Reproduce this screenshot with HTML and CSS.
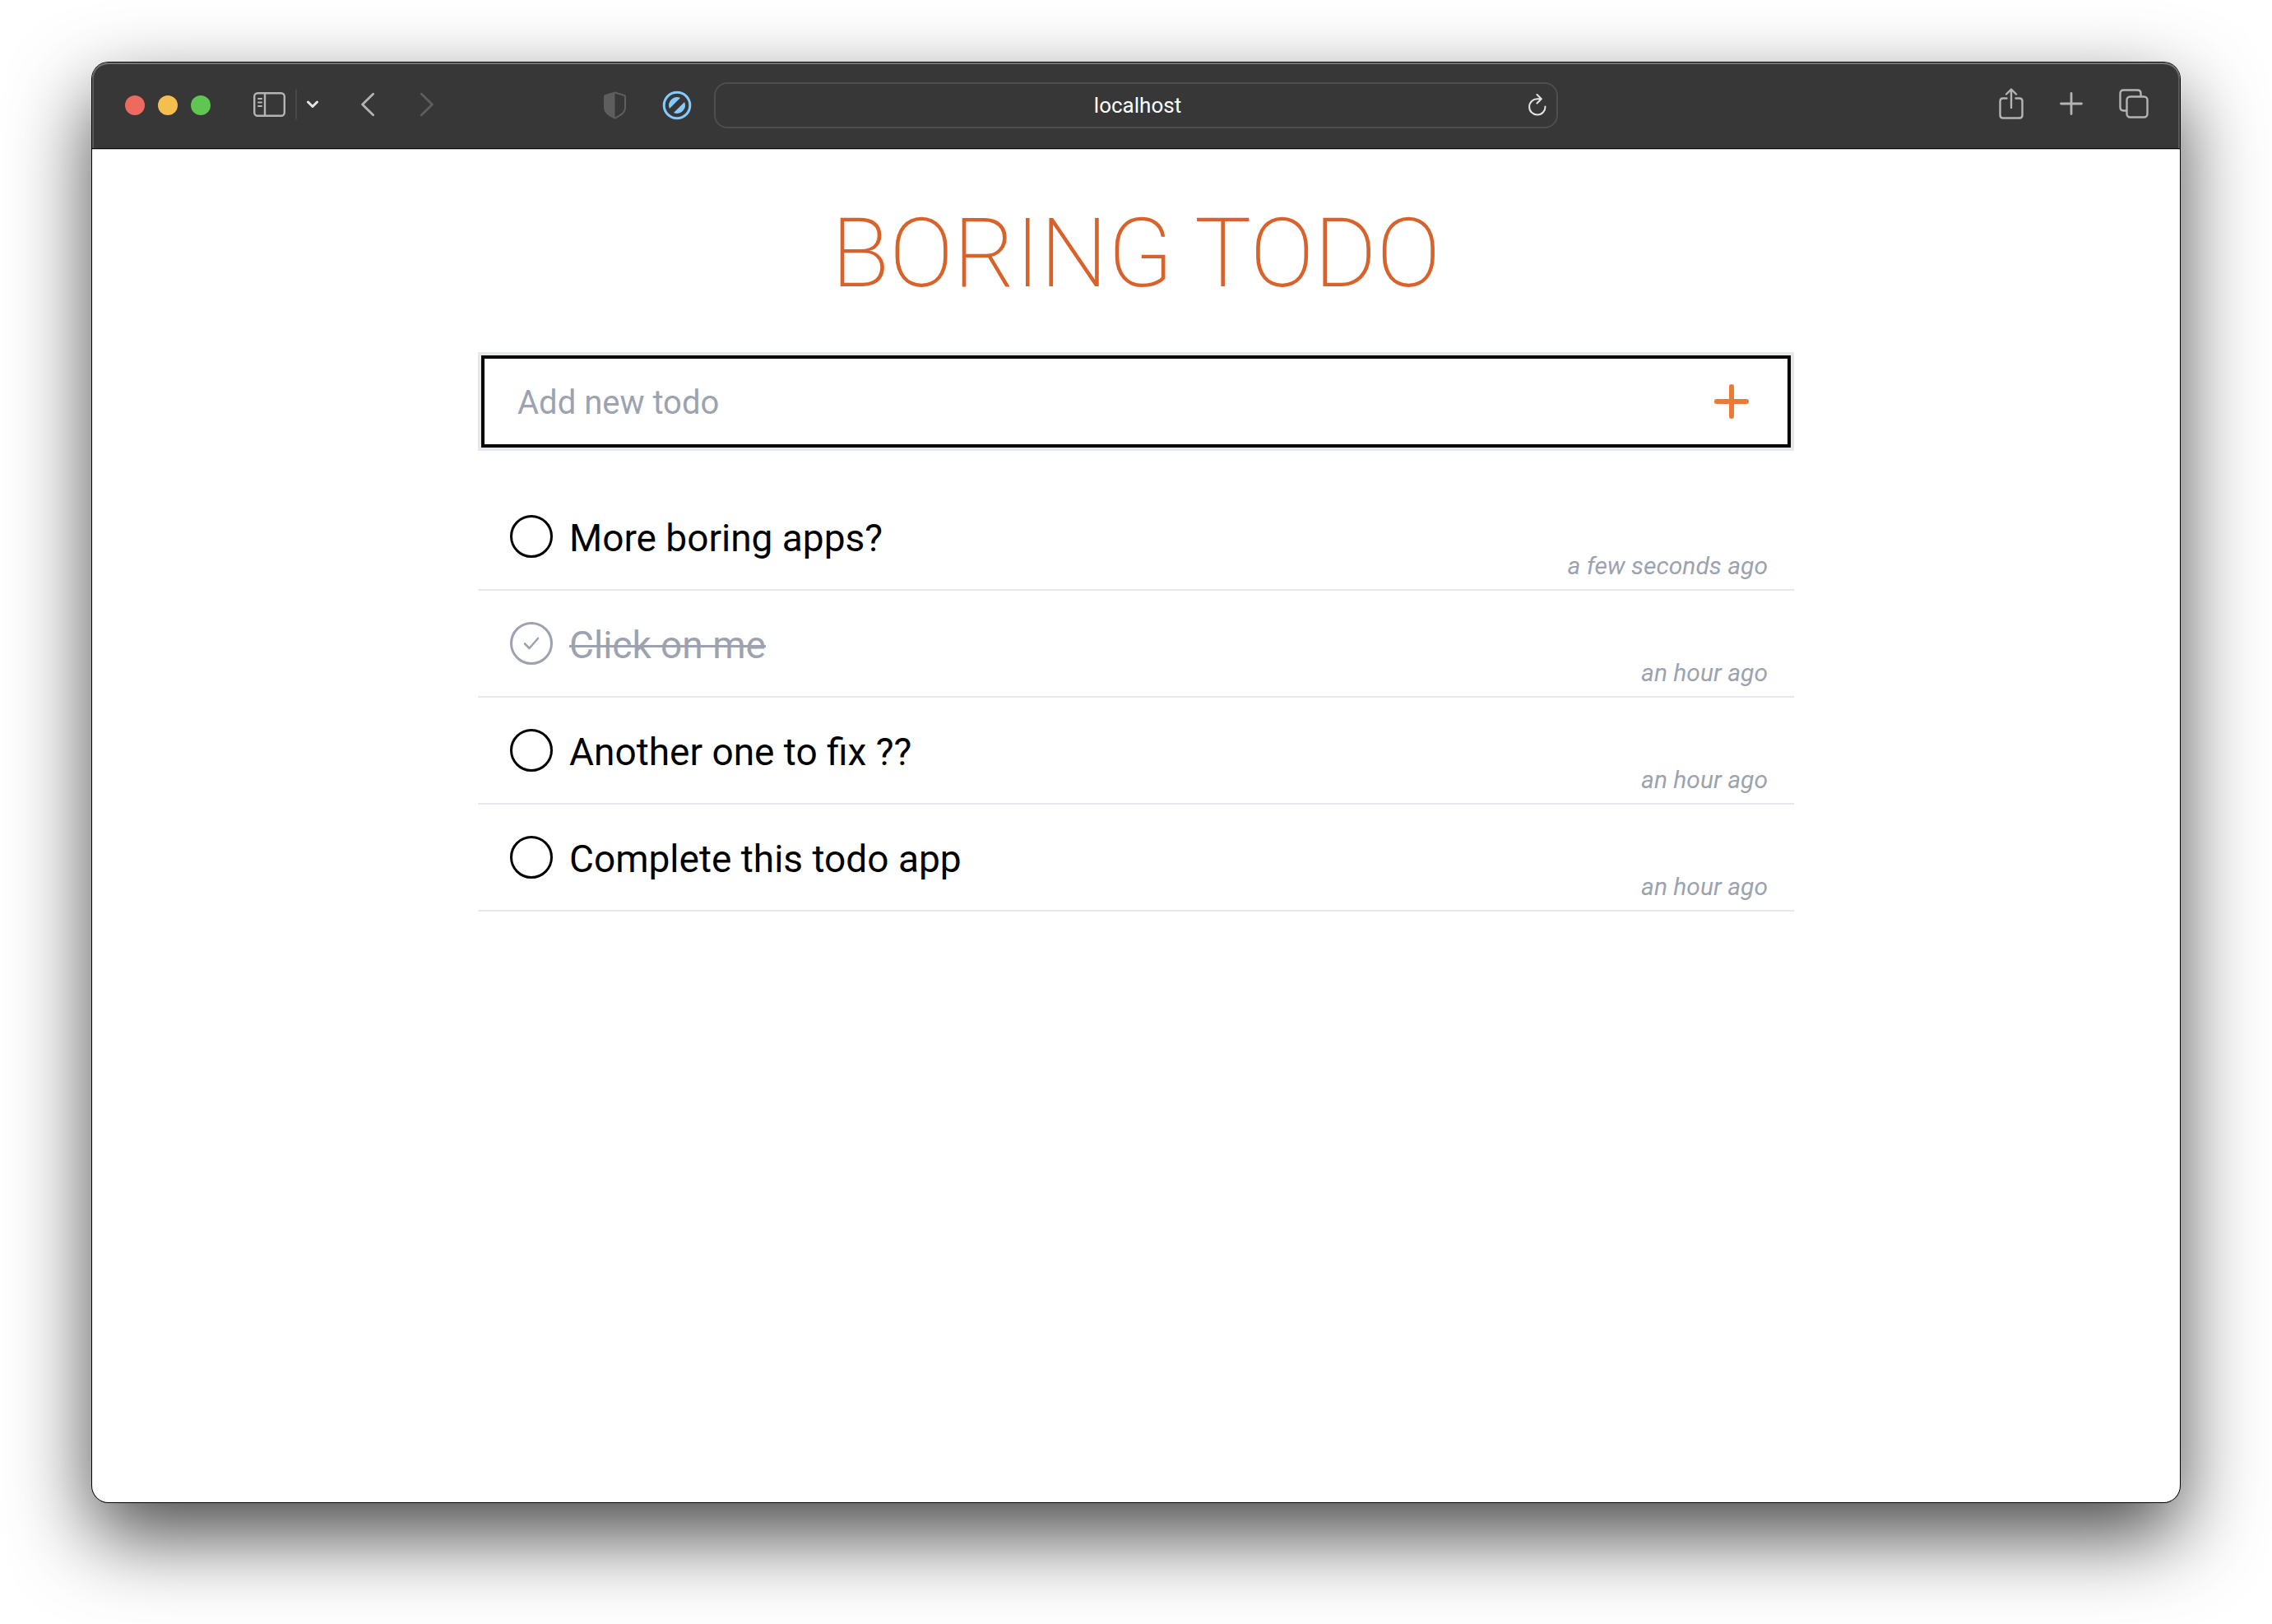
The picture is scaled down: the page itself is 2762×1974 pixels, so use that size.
FILE: index.html
```html
<!DOCTYPE html>
<html lang="en">
<head>
<meta charset="utf-8">
<title>Boring Todo</title>
<meta name="viewport" content="width=device-width, initial-scale=1">
<link rel="stylesheet" href="styles.css">
</head>
<body>
<div class="window">
  <header class="toolbar">
    <div class="toolbar-left">
      <div class="lights">
        <button class="light light-close" aria-label="Close"></button>
        <button class="light light-minimize" aria-label="Minimize"></button>
        <button class="light light-zoom" aria-label="Zoom"></button>
      </div>
      <div class="sidebar-tools">
        <button class="tool" aria-label="Show sidebar">
          <svg width="39" height="30" viewBox="0 0 39 30" fill="none" stroke="currentColor" stroke-width="2.400" stroke-linecap="round">
            <rect x="1.200" y="1.200" width="36.600" height="27.600" rx="4"/>
            <path d="M14 1v28"/><path stroke-width="2" d="M6 8h4M6 12.500h4M6 17h4"/>
          </svg>
        </button>
        <span class="separator"></span>
        <button class="tool tool-bright" aria-label="Tab groups">
          <svg width="14" height="10" viewBox="0 0 14 10" fill="none" stroke="currentColor" stroke-width="3" stroke-linecap="round" stroke-linejoin="round"><path d="M1.500 2 7 7.500 12.500 2"/></svg>
        </button>
      </div>
      <nav class="history" aria-label="History">
        <button class="tool" aria-label="Back">
          <svg width="16" height="30" viewBox="0 0 16 30" fill="none" stroke="currentColor" stroke-width="2.800" stroke-linecap="round" stroke-linejoin="round"><path d="M14.600 2.200 1.600 15l13 12.800"/></svg>
        </button>
        <button class="tool tool-dim" aria-label="Forward">
          <svg width="16" height="30" viewBox="0 0 16 30" fill="none" stroke="currentColor" stroke-width="2.800" stroke-linecap="round" stroke-linejoin="round"><path d="M1.400 2.200l13 12.800-13 12.800"/></svg>
        </button>
      </nav>
      <div class="extensions">
        <button class="tool tool-dim" aria-label="Privacy report">
          <svg width="27" height="34" viewBox="0 0 27 34"><path d="M13.500 1.500 25 5c.6.200 1 .7 1 1.400V20c0 5-3.500 8-12.500 12.700C4.500 28 1 25 1 20V6.400C1 5.700 1.400 5.200 2 5Z" fill="none" stroke="currentColor" stroke-width="2"/><path d="M13.500 1.500V32.700C4.500 28 1 25 1 20V6.400C1 5.700 1.400 5.200 2 5Z" fill="currentColor"/></svg>
        </button>
        <button class="tool tool-blue" aria-label="Content blocker">
          <svg width="36" height="36" viewBox="0 0 36 36"><circle cx="18" cy="18" r="15.800" fill="none" stroke="currentColor" stroke-width="3"/><path d="M8.900 22A10 10 0 0 1 22 8.900ZM27.100 14A10 10 0 0 1 14 27.100Z" fill="currentColor"/></svg>
        </button>
      </div>
    </div>
    <div class="address">
      <input class="address-input" type="text" value="localhost" aria-label="Address">
      <button class="tool tool-bright" aria-label="Reload">
        <svg width="22" height="28" viewBox="0 0 22 28" fill="none" stroke="currentColor" stroke-width="2" stroke-linecap="round" stroke-linejoin="round"><path d="M20.500 15.500A9.700 9.700 0 1 1 11 6.200h4.500M10.500 1l5.300 5.200-5.300 5.300"/></svg>
      </button>
    </div>
    <div class="toolbar-right">
      <button class="tool" aria-label="Share">
        <svg width="30" height="38" viewBox="0 0 30 38" fill="none" stroke="currentColor" stroke-width="2.400" stroke-linecap="round" stroke-linejoin="round"><path d="M9.500 12.500H5q-3.500 0-3.500 3.500v17q0 3.500 3.500 3.500h20q3.500 0 3.500-3.500V16q0-3.500-3.500-3.500h-4.500M15 24V2M9 7.500 15 1.500l6 6"/></svg>
      </button>
      <button class="tool" aria-label="New tab">
        <svg width="28" height="28" viewBox="0 0 28 28" fill="none" stroke="currentColor" stroke-width="2.800" stroke-linecap="round"><path d="M14 1.500v25M1.500 14h25"/></svg>
      </button>
      <button class="tool" aria-label="Tab overview">
        <svg width="36" height="36" viewBox="0 0 36 36" fill="none" stroke="currentColor" stroke-width="2.400"><rect x="9.500" y="9.500" width="25" height="25" rx="4"/><path d="M9.500 26.500H5.500q-4 0-4-4v-17q0-4 4-4h17q4 0 4 4v4"/></svg>
      </button>
    </div>
  </header>
  <main class="page">
    <h1 class="title">BORING TODO</h1>
    <form class="new-todo">
      <input class="new-todo-input" type="text" placeholder="Add new todo" aria-label="Add new todo">
      <button class="add" type="button" aria-label="Add">
        <svg width="42" height="42" viewBox="0 0 42 42" fill="none" stroke="currentColor" stroke-width="6" stroke-linecap="round"><path d="M21 3v36M3 21h36"/></svg>
      </button>
    </form>
    <ul class="todos">
      <li class="todo">
        <label class="todo-label"><input class="check" type="checkbox"><span class="todo-text">More boring apps?</span></label>
        <time class="age">a few seconds ago</time>
      </li>
      <li class="todo">
        <label class="todo-label"><input class="check" type="checkbox" checked><span class="todo-text">Click on me</span></label>
        <time class="age">an hour ago</time>
      </li>
      <li class="todo">
        <label class="todo-label"><input class="check" type="checkbox"><span class="todo-text">Another one to fix ??</span></label>
        <time class="age">an hour ago</time>
      </li>
      <li class="todo">
        <label class="todo-label"><input class="check" type="checkbox"><span class="todo-text">Complete this todo app</span></label>
        <time class="age">an hour ago</time>
      </li>
    </ul>
  </main>
</div>
</body>
</html>
```
FILE: styles.css
```css
*,
*::before,
*::after {
  box-sizing: border-box;
}

body {
  display: flex;
  flex-direction: column;
  min-height: 100vh;
  margin: 0;
  padding: 76px 112px 148px;
  background: #fff;
  color: #000;
  font-family: Roboto, "Liberation Sans", sans-serif;
}

button,
input {
  margin: 0;
  padding: 0;
  border: 0;
  background: none;
  color: inherit;
  font: inherit;
}

svg {
  display: block;
}

.window {
  flex: 1;
  display: flex;
  flex-direction: column;
  border-radius: 20px;
  background: #fff;
  box-shadow: 0 0 0 1px #000, 0 40px 98px rgba(0, 0, 0, 0.72);
}

/* Browser toolbar */
.toolbar {
  display: grid;
  grid-template-columns: 1fr minmax(0, 1026px) 1fr;
  align-items: center;
  height: 105px;
  border-bottom: 1px solid #000;
  border-radius: 20px 20px 0 0;
  background: #373737;
  box-shadow: inset 0 2px #757674, inset 2px 0 #5c5c5c, inset -2px 0 #5c5c5c, 0 1px #b8b8b8;
  color: #b4b4b4;
}

.toolbar-left,
.toolbar-right,
.lights,
.sidebar-tools,
.history,
.extensions {
  display: flex;
  align-items: center;
}

.toolbar-left {
  padding: 0 27px 0 40px;
}

.toolbar-right {
  justify-content: flex-end;
  gap: 44px;
  padding: 0 38px 4px 0;
}

.lights {
  gap: 16px;
  margin-right: 52px;
}

.light {
  width: 24px;
  height: 24px;
  border-radius: 50%;
}

.light-close {
  background: #ec6a5e;
}

.light-minimize {
  background: #f4bf4f;
}

.light-zoom {
  background: #61c554;
}

.sidebar-tools {
  gap: 12px;
  margin-right: 52px;
  padding-bottom: 2px;
}

.separator {
  width: 2px;
  height: 36px;
  background: #484848;
}

.history {
  gap: 56px;
  padding-bottom: 2px;
}

.extensions {
  gap: 44px;
  margin-left: auto;
}

.tool-bright {
  color: #e4e4e4;
}

.tool-dim {
  color: #5e5e5e;
}

.tool-blue {
  color: #84ccff;
}

.address {
  display: flex;
  align-items: center;
  height: 56px;
  padding: 0 12px 0 38px;
  border: 2px solid #4e4e4e;
  border-radius: 16px;
}

.address-input {
  flex: 1;
  min-width: 0;
  color: #fff;
  font-size: 26px;
  text-align: center;
}

/* Todo page */
.page {
  display: flex;
  flex-direction: column;
  width: 100%;
  max-width: 1600px;
  margin: 0 auto;
  padding-top: 67px;
}

.title {
  margin: 0 0 60px;
  color: #d9622b;
  font-size: 116px;
  font-weight: 200;
  line-height: 120px;
  text-align: center;
}

.new-todo {
  display: flex;
  align-items: center;
  height: 120px;
  margin-bottom: 40px;
  padding-right: 51px;
  border: 4px solid #e5e7eb;
  outline: 4px solid #000;
  outline-offset: -8px;
}

.new-todo-input {
  flex: 1;
  min-width: 0;
  height: 100%;
  padding: 2px 0 0 44px;
  outline: 0;
  font-size: 40px;
}

.new-todo-input::placeholder {
  color: #9ca3af;
  opacity: 1;
}

.add {
  color: #ea7a35;
}

.todos {
  margin: 0;
  padding: 0;
  list-style: none;
}

.todo {
  display: flex;
  justify-content: space-between;
  height: 130px;
  padding: 0 32px 0 39px;
  border-bottom: 2px solid #e5e7eb;
}

.todo-label {
  display: flex;
  align-items: center;
  gap: 20px;
  font-size: 46px;
}

.todo-text {
  padding-top: 4px;
}

.check {
  appearance: none;
  width: 52px;
  height: 52px;
  border: 3px solid #000;
  border-radius: 50%;
}

.check:checked {
  border-color: #9ca3af;
  background: url("data:image/svg+xml,%3Csvg xmlns='http://www.w3.org/2000/svg' width='20' height='16' fill='none' stroke='%239ca3af' stroke-width='2.600' stroke-linecap='round' stroke-linejoin='round'%3E%3Cpath d='M2 8.500 7.500 14 18 2'/%3E%3C/svg%3E") center no-repeat;
}

.check:checked + .todo-text {
  color: #9ca3af;
  text-decoration: line-through;
  text-decoration-thickness: 3px;
}

.age {
  align-self: flex-end;
  padding-bottom: 8px;
  color: #9ca3af;
  font-size: 30px;
  font-style: italic;
  line-height: 40px;
}
```
